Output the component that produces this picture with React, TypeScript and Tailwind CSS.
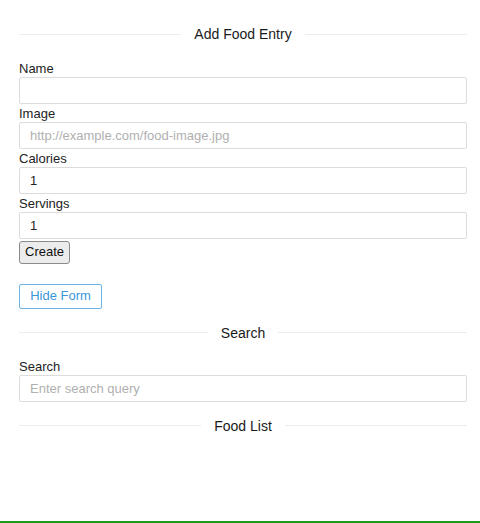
import React from "react";

function SectionTitle({ title }: { title: string }) {
  return (
    <div className="flex items-center gap-[13px]">
      <div className="h-px flex-1 bg-[#ececec]" />
      <h2 className="text-[14px] leading-[20px] text-[#1a1a1a]">{title}</h2>
      <div className="h-px flex-1 bg-[#ececec]" />
    </div>
  );
}

function Field({ label, placeholder, value }: { label: string; placeholder?: string; value?: string }) {
  return (
    <div className="flex flex-col">
      <label className="h-[18px] text-[13px] leading-[20px] text-[#222]">{label}</label>
      <input
        className="h-[27px] w-full rounded-[2px] border border-[#dcdcdc] px-[10px] text-[13px] text-[#222] outline-none placeholder:text-[#b0b0b0]"
        placeholder={placeholder}
        defaultValue={value}
      />
    </div>
  );
}

export default function App() {
  return (
    <div className="flex min-h-[523px] flex-col border-b-2 border-[#1f9a1f] bg-white font-['Liberation_Sans',Arial,sans-serif]">
      <div className="pl-[19px] pr-[13px] pt-[24px]">
        <SectionTitle title="Add Food Entry" />

        <form className="mt-[15px] flex flex-col" onSubmit={(e) => e.preventDefault()}>
          <Field label="Name" />
          <Field label="Image" placeholder="http://example.com/food-image.jpg" />
          <Field label="Calories" value="1" />
          <Field label="Servings" value="1" />
          <div>
            <button
              type="submit"
              className="h-[23px] rounded-[3px] border border-[#8a8a8a] bg-[#ececec] px-[5px] text-[13px] leading-[20px] text-[#111]"
            >
              Create
            </button>
          </div>
        </form>

        <button className="mt-[20px] h-[25px] w-[83px] rounded-[2px] border border-[#6ab4ea] text-[13px] text-[#3b97dc]">
          Hide Form
        </button>

        <div className="mt-[14px]">
          <SectionTitle title="Search" />
        </div>

        <div className="mt-[14px]">
          <Field label="Search" placeholder="Enter search query" />
        </div>

        <div className="mt-[14px]">
          <SectionTitle title="Food List" />
        </div>
      </div>
    </div>
  );
}
